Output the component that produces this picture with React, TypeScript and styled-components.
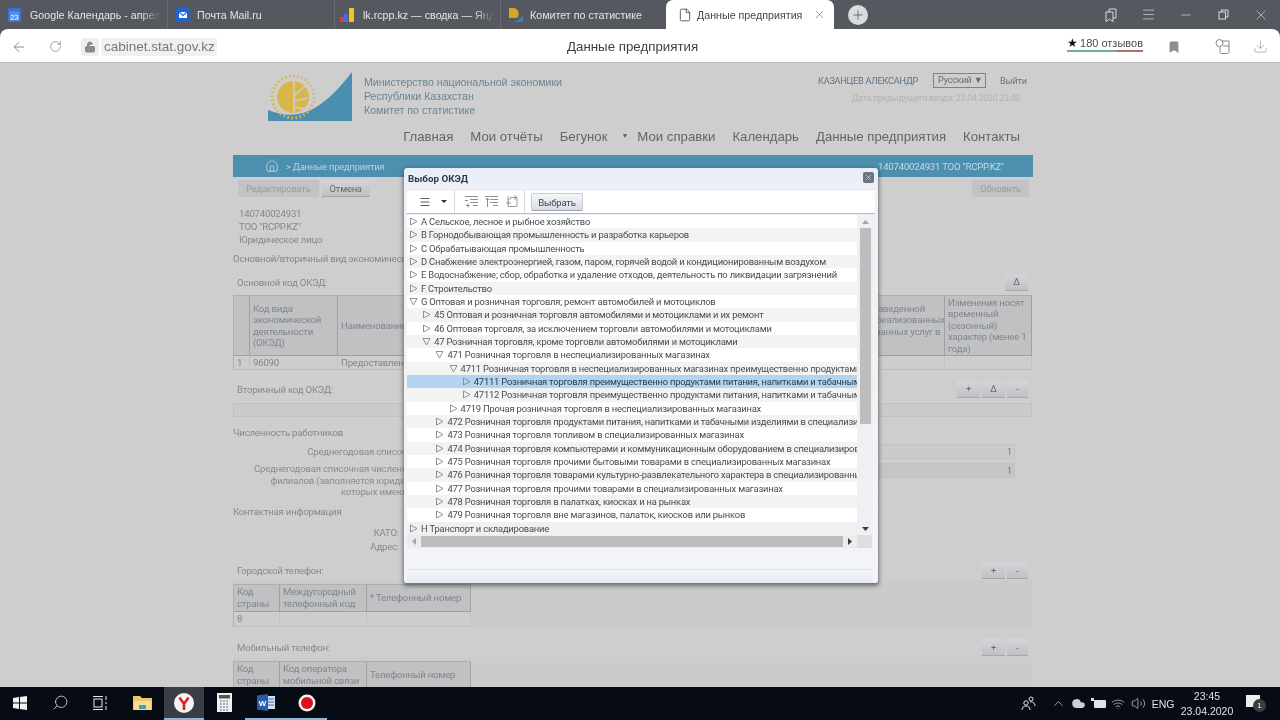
import { ArrowLeft, Bookmark, ChevronUp, Cloud, Download, File, Home, LockOpen, Menu, Minus, Plus, RotateCw, Search, Volume2, Wifi, X } from 'lucide-react';
import styled, { createGlobalStyle } from 'styled-components';

const FONT = '"Liberation Sans", Arial, sans-serif';
// the site sets Tahoma; Roboto is the nearest in shape here, tightened a little for the width
const SMALL_FONT = 'Roboto, "Liberation Sans", sans-serif';

const GlobalStyle = createGlobalStyle`
  html, body {
    margin: 0;
    padding: 0;
    width: 1280px;
    height: 720px;
    overflow: hidden;
    font-family: ${FONT};
  }
  * { box-sizing: border-box; }
`;

const Screen = styled.div`
  width: 1280px;
  height: 720px;
  display: flex;
  flex-direction: column;
  background: #55585f;
  filter: blur(0.3px);
`;

/* browser chrome */

const TabBar = styled.div`
  height: 29px;
  flex: none;
  display: flex;
  align-items: stretch;
  background: #55585f;
`;

const Tab = styled.div<{ $width: number; $left: number; $gap: number; $divider?: boolean }>`
  width: ${(p) => p.$width}px;
  padding-left: ${(p) => p.$left}px;
  display: flex;
  align-items: center;
  gap: ${(p) => p.$gap}px;
  color: #e4e5e7;
  font-size: 10.7px;
  white-space: nowrap;
  overflow: hidden;
  border-right: ${(p) => (p.$divider ? '1px solid #696c72' : 'none')};
`;

const TabTitle = styled.span<{ $fade?: boolean }>`
  flex: 1;
  overflow: hidden;
  margin-right: 6px;
  ${(p) => p.$fade && 'mask-image: linear-gradient(to right, #000 85%, transparent 100%);'}
`;

const ActiveTab = styled.div`
  width: 168px;
  margin-left: -4px;
  padding: 0 8px 0 12px;
  display: flex;
  align-items: center;
  background: #fff;
  border-radius: 7px 7px 0 0;
  color: #44464a;
  font-size: 10.7px;
  white-space: nowrap;
`;

const ActiveTitle = styled.span`
  margin-left: 5px;
  flex: 1;
`;

const NewTab = styled.div`
  width: 20px;
  height: 20px;
  margin: 5px 0 0 14px;
  border-radius: 50%;
  background: #d9dbe0;
  color: #55585f;
  display: flex;
  align-items: center;
  justify-content: center;
`;

const WindowButtons = styled.div`
  margin-left: auto;
  display: flex;
  align-items: center;
  color: #d8dadd;
`;

const WindowButton = styled.div`
  width: 37.5px;
  display: flex;
  justify-content: center;
`;

const AddressBar = styled.div`
  height: 34px;
  flex: none;
  padding-top: 2px;
  display: flex;
  align-items: center;
  background: #fff;
  border-radius: 8px 8px 0 0;
  color: #6d6f73;
  border-bottom: 1px solid #b9b9b9;
`;

const BackSlot = styled.div`
  width: 37px;
  padding-left: 11px;
  display: flex;
`;

const ReloadSlot = styled.div`
  width: 44px;
  padding-left: 12px;
  display: flex;
`;

const LockBox = styled.div`
  width: 18px;
  height: 18px;
  margin-right: 2px;
  border-radius: 3px;
  background: #eeeeee;
  display: flex;
  align-items: center;
  justify-content: center;
  color: #8a8a8a;
`;

const UrlBox = styled.div`
  width: 116px;
  height: 18px;
  padding-left: 3px;
  border-radius: 3px;
  background: #f0f0f0;
  color: #77797c;
  font-size: 13.5px;
  line-height: 18px;
`;

const PageTitle = styled.div`
  margin-left: 350px;
  color: #3f4144;
  font-size: 13.3px;
`;

const Reviews = styled.div`
  margin-left: auto;
  margin-right: 24px;
  margin-top: -5px;
  height: 15px;
  color: #4a4c50;
  font-size: 11px;
  line-height: 13px;
  border-bottom: 2px solid;
  border-image: linear-gradient(to right, #6fb08d 66%, #b96a6e 66%) 1;
`;

const Star = styled.span`
  color: #111;
  font-size: 12px;
  margin-right: 2px;
`;

const BarIcons = styled.div`
  display: flex;
  align-items: center;
  margin-right: 12px;
  color: #8a8c90;
`;

const ExtensionSlot = styled.div`
  margin-left: 33px;
  display: flex;
`;

const DownloadSlot = styled.div`
  margin-left: 22px;
  display: flex;
`;

/* dimmed page */

const Page = styled.div`
  position: relative;
  flex: 1;
  overflow: hidden;
  padding-left: 233px;
  background: #cecece;
  color: #777a7c;
  font-family: ${SMALL_FONT};
  font-size: 9.6px;
  letter-spacing: -0.2px;
`;

const Column = styled.div`
  width: 800px;
`;

const Header = styled.header`
  height: 92px;
`;

const HeaderTop = styled.div`
  display: flex;
  height: 50px;
  padding-top: 8px;
`;

const LogoSlot = styled.div`
  width: 131px;
  padding-left: 35px;
`;

const Ministry = styled.div`
  padding-top: 4px;
  color: #6e8391;
  font-family: ${FONT};
  font-size: 10.6px;
  line-height: 14px;
  letter-spacing: 0;
`;

const UserBlock = styled.div`
  margin-left: auto;
  width: 215px;
  padding-top: 2px;
  text-align: right;
`;

const UserRow = styled.div`
  display: flex;
  align-items: center;
  color: #5d7285;
  font-size: 9.1px;
  height: 15px;
  white-space: nowrap;
`;

const LangSelect = styled.div`
  width: 53px;
  height: 15px;
  margin: 0 14px 0 15px;
  border: 1px solid #808285;
  color: #6a6c6e;
  text-align: left;
  padding-left: 4px;
  line-height: 13px;
`;

const LastLogin = styled.div`
  margin: 5px 13px 0 0;
  color: #b0b2b4;
  font-size: 8.7px;
`;

const Nav = styled.nav`
  display: flex;
  justify-content: flex-end;
  gap: 17px;
  margin-top: 16px;
  padding-right: 13px;
  color: #62666a;
  font-family: ${FONT};
  font-size: 13.2px;
  letter-spacing: 0;
  white-space: nowrap;
`;

const NavCaret = styled.span`
  font-size: 7px;
  margin: 3px -8px 0 -3px;
`;

const Crumbs = styled.div`
  height: 22px;
  padding: 0 29px 0 32px;
  display: flex;
  align-items: center;
  background: #4c8fae;
  color: #b7d3e0;
  font-size: 9.4px;
`;

const CrumbText = styled.span`
  margin-left: 7px;
`;

const CrumbRight = styled.span`
  margin-left: auto;
  color: #c3dbe6;
  font-size: 9.6px;
`;

const ActionRow = styled.div`
  display: flex;
  gap: 3px;
  margin: 3px 0 0 5px;
`;

const PageButton = styled.div<{ $muted?: boolean; $wide?: number }>`
  height: 17px;
  padding: 0 8px;
  ${(p) => p.$wide && `width: ${p.$wide}px; padding: 0; justify-content: center;`}
  display: flex;
  align-items: center;
  background: ${(p) => (p.$muted ? '#c2c3c6' : 'linear-gradient(#d4d5d8, #bfc1c4)')};
  border-bottom: ${(p) => (p.$muted ? 'none' : '1px solid #a5a7aa')};
  color: ${(p) => (p.$muted ? '#9a9c9f' : '#66696d')};
  font-size: 9.4px;
`;

const RefreshSlot = styled.div`
  margin-left: auto;
  margin-right: 4px;
`;

const Company = styled.div`
  margin: 10px 0 0 6px;
  line-height: 13px;
  color: #84878a;
`;

const Note = styled.div<{ $top: number }>`
  margin-top: ${(p) => p.$top}px;
  color: #85888a;
  line-height: 13px;
`;

const SectionHead = styled.div<{ $top: number }>`
  display: flex;
  align-items: center;
  justify-content: space-between;
  height: 18px;
  margin-top: ${(p) => p.$top}px;
  padding: 0 5px 0 4px;
  color: #85888a;
`;

const Tools = styled.div`
  display: flex;
  gap: 2px;
`;

const DataGrid = styled.div<{ $columns: string; $width?: string }>`
  display: grid;
  grid-template-columns: ${(p) => p.$columns};
  width: ${(p) => p.$width ?? '799px'};
  margin-top: 4px;
  border: 1px solid #acaeb0;
  border-width: 1px 0 0 1px;
  color: #83868a;
  line-height: 11.5px;
`;

const HeadCell = styled.div<{ $height: number }>`
  height: ${(p) => p.$height}px;
  padding: 0 3px;
  display: flex;
  align-items: center;
  overflow: hidden;
  background: #bfc1c3;
  border-right: 1px solid #9fa1a3;
  border-bottom: 1px solid #9fa1a3;
`;

const HeadLines = styled.span`
  white-space: nowrap;
`;

const BodyCell = styled.div<{ $height?: number }>`
  height: ${(p) => p.$height ?? 14}px;
  padding: 0 3px;
  display: flex;
  align-items: center;
  white-space: nowrap;
  overflow: hidden;
  background: #cdcdcd;
  border-right: 1px solid #c2c2c2;
  border-bottom: 1px solid #bdbdbd;
`;

const EmptyPanel = styled.div`
  height: 14px;
  margin-top: 5px;
  width: 799px;
  border: 1px solid #c0c0c0;
  background: #cbcbcb;
`;

const CountRow = styled.div<{ $top: number }>`
  display: grid;
  grid-template-columns: 247px 535px;
  align-items: start;
  margin-top: ${(p) => p.$top}px;
`;

const CountLabel = styled.div<{ $pad?: number }>`
  padding-top: ${(p) => p.$pad ?? 0}px;
  text-align: right;
  color: #8a8d8f;
  line-height: 11.5px;
  white-space: nowrap;
`;

const CountValue = styled.div<{ $shade?: boolean }>`
  height: 15px;
  padding-right: 2px;
  text-align: right;
  line-height: 13px;
  background: ${(p) => (p.$shade ? '#c4c5c7' : '#cbcbcb')};
  border: 1px solid #c2c2c2;
`;

const AddressLine = styled.div<{ $top: number }>`
  width: 166px;
  margin-top: ${(p) => p.$top}px;
  text-align: right;
  color: #85888a;
  line-height: 14px;
`;

const PhoneWrap = styled.div`
  display: flex;
  width: 800px;
  background: #cbcbcb;
`;

/* dialog */

const Dialog = styled.div`
  position: absolute;
  left: 404px;
  top: 105px;
  width: 474px;
  height: 415px;
  padding: 0 5px 0 3px;
  display: flex;
  flex-direction: column;
  border-radius: 3px;
  background: linear-gradient(#e6eef6, #eef1f7 5%, #f2f4f9);
  box-shadow: 0 2px 4px 1px rgba(60, 60, 60, 0.65);
  color: #46494c;
`;

const DialogTitle = styled.div`
  height: 21px;
  flex: none;
  padding-left: 1px;
  display: flex;
  align-items: center;
  justify-content: space-between;
  color: #2c3a4c;
  font-size: 9.8px;
  font-weight: bold;
  letter-spacing: 0;
`;

const CloseBox = styled.div`
  width: 11px;
  height: 11px;
  margin: -2px -1px 0 0;
  border-radius: 2px;
  background: #6d7480;
  color: #e8e8e8;
  display: flex;
  align-items: center;
  justify-content: center;
`;

const Toolbar = styled.div`
  height: 25px;
  flex: none;
  margin-right: -2px;
  display: flex;
  align-items: stretch;
  background: #fff;
  border-top: 1px solid #e3e6ea;
  border-bottom: 1px solid #b6b8bb;
`;

const ToolGroup = styled.div<{ $width: number; $gap?: number; $inset: number }>`
  width: ${(p) => p.$width}px;
  padding-left: ${(p) => p.$inset}px;
  display: flex;
  align-items: center;
  justify-content: center;
  gap: ${(p) => p.$gap ?? 0}px;
  border-right: 1px solid #d8dadd;
`;

const ToolCaret = styled.span`
  width: 0;
  height: 0;
  margin-left: 10px;
  border-left: 3px solid transparent;
  border-right: 3px solid transparent;
  border-top: 3px solid #30333a;
`;

const PickButton = styled.div`
  height: 18px;
  margin: 3px 0 0 6px;
  width: 52px;
  display: flex;
  align-items: center;
  justify-content: center;
  border: 1px solid #c8ccd2;
  border-bottom-color: #9ba2ab;
  border-radius: 2px;
  background: linear-gradient(#f4f6f9, #d8dee6);
  color: #404754;
`;

const TreeArea = styled.div`
  height: 333px;
  flex: none;
  margin-top: 1px;
  display: grid;
  grid-template-columns: 450px 15px;
  grid-template-rows: 320px 13px;
  overflow: hidden;
  background: #eef0f3;
`;

const TreeList = styled.div`
  overflow: hidden;
`;

const TreeRow = styled.div<{ $depth: number; $alt: boolean; $selected?: boolean; $last?: boolean }>`
  height: 13.333px;
  padding-left: ${(p) => 2 + p.$depth * 13.2}px;
  display: flex;
  align-items: center;
  gap: 3px;
  background: ${(p) => (p.$selected ? '#b2d4f1' : p.$last ? '#eef0f3' : p.$alt ? '#f3f3f2' : '#ffffff')};
  color: ${(p) => (p.$selected ? '#2e3c4a' : '#4a4c4f')};
  font-size: 9.4px;
  white-space: nowrap;
  overflow: hidden;
`;

const VScroll = styled.div`
  padding-left: 2px;
  display: flex;
  flex-direction: column;
  align-items: center;
  background: #eef0f3;
`;

const ScrollCap = styled.div`
  height: 13px;
  flex: none;
  display: flex;
  align-items: center;
  justify-content: center;
`;

const VThumb = styled.div`
  width: 11px;
  height: 196px;
  background: #bdbdbd;
`;

const VTrack = styled.div`
  flex: 1;
`;

const HScroll = styled.div`
  display: flex;
  align-items: center;
  height: 13px;
  background: #ececec;
`;

const HThumb = styled.div`
  width: 424px;
  height: 11px;
  background: #bdbdbd;
`;

const HCap = styled.div`
  width: 14px;
  display: flex;
  justify-content: center;
`;

const Corner = styled.div`
  background: #dfdfdf;
`;

const DialogFooter = styled.div`
  height: 22px;
  flex: none;
  border-bottom: 1px solid #dfe3e8;
`;

const Grip = styled.div`
  flex: 1;
  background: linear-gradient(#f4f6fa, #e6ebf2);
`;

/* taskbar */

const Taskbar = styled.div`
  height: 33px;
  flex: none;
  display: flex;
  align-items: center;
  background: #070b13;
  color: #e9e9e9;
`;

const TaskSlot = styled.div<{ $width: number; $active?: boolean; $running?: boolean }>`
  width: ${(p) => p.$width}px;
  height: 33px;
  display: flex;
  align-items: center;
  justify-content: center;
  background: ${(p) => (p.$active ? '#3a3d44' : 'transparent')};
  border-bottom: 2px solid ${(p) => (p.$active || p.$running ? '#8fb6d8' : 'transparent')};
`;

const Tray = styled.div`
  margin-left: auto;
  display: flex;
  align-items: center;
  color: #e2e2e2;
`;

const TrayItem = styled.div<{ $width: number; $left?: number }>`
  width: ${(p) => p.$width}px;
  margin-left: ${(p) => p.$left ?? 0}px;
  display: flex;
  justify-content: center;
  align-items: center;
  font-size: 10.5px;
`;

const Clock = styled.div`
  width: 66px;
  text-align: center;
  font-size: 10.5px;
  line-height: 15px;
`;

const Badge = styled.span`
  position: absolute;
  right: -6px;
  bottom: -5px;
  width: 13px;
  height: 13px;
  border-radius: 50%;
  background: #3a3c40;
  color: #fff;
  font-size: 8px;
  line-height: 13px;
  text-align: center;
`;

const NoteIcon = styled.div`
  position: relative;
  width: 14px;
  height: 12px;
  background: #eeeeee;
  margin: -6px 14px 0 0;
`;

function TreeArrow({ open }: { open?: boolean }) {
  return (
    <svg width="9" height="9" viewBox="0 0 9 9" style={{ flex: 'none' }}>
      <path d={open ? 'M1 1.5 H8 L4.5 8 Z' : 'M1.5 1 V8 L8 4.5 Z'} fill="none" stroke="#85878a" strokeWidth="0.9" />
    </svg>
  );
}

function Logo() {
  return (
    <svg width="84" height="50" viewBox="0 0 84 50">
      <path d="M0 50 V39 C12 44 24 45 35 42 C52 37 68 22 84 1 V50 Z" fill="#4a8fb0" />
      <circle cx="25" cy="26" r="16" fill="#d9b648" />
      <path d="M26 10 V42 M26 25 L37 15 M26 30 L40 27 M26 36 L37 38" stroke="#cecece" strokeWidth="1.5" fill="none" />
      <circle cx="25" cy="26" r="21" fill="none" stroke="#d9b648" strokeWidth="3" strokeDasharray="1.5 2.6" />
    </svg>
  );
}

function CalendarIcon() {
  return (
    <svg width="13" height="14" viewBox="0 0 13 14">
      <rect width="13" height="14" rx="1.5" fill="#3b6fd0" />
      <rect x="1.5" y="3.5" width="10" height="9" fill="#5d8ee6" />
      <text x="6.5" y="11.5" fontSize="7.5" fill="#fff" textAnchor="middle" fontFamily={FONT}>23</text>
    </svg>
  );
}

function MailIcon() {
  return (
    <svg width="14" height="14" viewBox="0 0 14 14">
      <rect width="14" height="14" rx="3" fill="#1c64d6" />
      <path d="M3 4 H11 V10 H3 Z" fill="#fff" />
      <path d="M3 4 L7 7.5 L11 4" fill="none" stroke="#1c64d6" strokeWidth="1.1" />
    </svg>
  );
}

function MetricaIcon() {
  return (
    <svg width="15" height="16" viewBox="0 0 15 16">
      <rect x="0" y="10" width="4" height="5" fill="#e23b3b" />
      <rect x="4" y="7" width="4" height="8" fill="#4a6cd8" />
      <rect x="9" y="1" width="5" height="14" rx="1" fill="#f5c518" />
    </svg>
  );
}

function StatIcon() {
  return (
    <svg width="16" height="16" viewBox="0 0 16 16">
      <path d="M1 1 H6 A6 6 0 0 1 9 11 H1 Z" fill="#d9a62b" />
      <path d="M5 15 C9 14 13 11 15 8 V15 Z" fill="#3a7fb0" />
    </svg>
  );
}

function TabListIcon() {
  return (
    <svg width="16" height="16" viewBox="0 0 16 16" fill="none" stroke="currentColor" strokeWidth="1">
      <path d="M6 5 V2 H13 V11 H10" />
      <path d="M3 5 H10 V14.5 L6.5 12 L3 14.5 Z" />
    </svg>
  );
}

function RestoreIcon() {
  return (
    <svg width="11" height="11" viewBox="0 0 11 11" fill="none" stroke="currentColor" strokeWidth="1">
      <rect x="1" y="3" width="6.5" height="7" />
      <path d="M3.5 3 V1 H10 V8 H7.5" />
    </svg>
  );
}

function ExtensionIcon() {
  return (
    <svg width="17" height="17" viewBox="0 0 17 17" fill="none" stroke="#85878b" strokeWidth="1">
      <circle cx="5.5" cy="5" r="3.5" />
      <path d="M8 3 H15 V14 C15 15 14 15.5 13 15.5 H8 C6.5 15.5 6 14.5 6 13.5 V9" />
      <path d="M9 8 H15" />
    </svg>
  );
}

function ExpandAllIcon({ flip }: { flip?: boolean }) {
  return (
    <svg width="13" height="13" viewBox="0 0 13 13" fill="none" stroke="#8d9093" strokeWidth="1">
      <path d="M0 1.5 H13" />
      <path d="M5 4.5 H13 M5 7.5 H13 M8 10.5 H13" />
      {flip ? <path d="M2.5 3 V12 M1 5 L2.5 3 L4 5" /> : <path d="M1 10.5 H5 M3 8.5 V12.5 M0 5.5 H3" />}
    </svg>
  );
}

function MoveNodeIcon() {
  return (
    <svg width="14" height="13" viewBox="0 0 14 13" fill="none" stroke="#9a9c9f" strokeWidth="1">
      <path d="M3 1 V4 H6" />
      <path d="M5 2.5 H12 V11.5 H3 V4" />
      <path d="M9 0.5 L12 2.5 L9 4.5" />
      <path d="M1 8 H6 M3.5 6 V10" />
    </svg>
  );
}

function WindowsLogo() {
  return (
    <svg width="14" height="14" viewBox="0 0 14 14" fill="#f2f2f2">
      <path d="M0 2 L6 1.1 V6.6 H0 Z M7 1 L14 0 V6.6 H7 Z M0 7.4 H6 V12.9 L0 12 Z M7 7.4 H14 V14 L7 13 Z" />
    </svg>
  );
}

function TaskViewIcon() {
  return (
    <svg width="15" height="14" viewBox="0 0 15 14" fill="none" stroke="#e9e9e9" strokeWidth="1">
      <rect x="1" y="3" width="8" height="8" />
      <path d="M0 0.5 H10 M0 13.5 H10 M13 0 V4 M13 6 V8 M13 10 V14" />
    </svg>
  );
}

function FolderIcon() {
  return (
    <svg width="19" height="16" viewBox="0 0 19 16">
      <path d="M0 1 H7 L9 3 H19 V15 H0 Z" fill="#e9c867" />
      <rect x="1" y="6" width="17" height="9" fill="#f6dd8e" />
      <rect x="6" y="10" width="7" height="4" fill="#3aa0c8" />
    </svg>
  );
}

function YandexIcon() {
  return (
    <svg width="20" height="20" viewBox="0 0 20 20">
      <circle cx="10" cy="10" r="10" fill="#f4f4f4" />
      <path d="M5.5 4.5 L10 11 L14.5 4.5 M10 11 V17" fill="none" stroke="#d9232e" strokeWidth="2.6" />
    </svg>
  );
}

function CalculatorIcon() {
  return (
    <svg width="15" height="19" viewBox="0 0 15 19">
      <rect width="15" height="19" fill="#f1f1f1" />
      <rect x="2" y="2" width="11" height="3.5" fill="#555" />
      <path d="M3 8 H12 M3 11 H12 M3 14 H12 M3 17 H12" stroke="#444" strokeWidth="1.2" strokeDasharray="1.6 1.6" />
    </svg>
  );
}

function WordIcon() {
  return (
    <svg width="18" height="17" viewBox="0 0 18 17">
      <rect x="6" y="2" width="12" height="13" fill="#d4e1f3" />
      <path d="M10 5 H17 M10 8 H17 M10 11 H17" stroke="#3c6eb4" strokeWidth="1" />
      <path d="M0 1.5 L11 0 V17 L0 15.5 Z" fill="#2a5ca8" />
      <text x="5.5" y="11.5" fontSize="8" fontWeight="bold" fill="#fff" textAnchor="middle" fontFamily={FONT}>W</text>
    </svg>
  );
}

function RecordIcon() {
  return (
    <svg width="18" height="18" viewBox="0 0 18 18">
      <circle cx="9" cy="9" r="8.5" fill="#f4f4f4" />
      <circle cx="9" cy="9" r="6" fill="#d8121c" />
    </svg>
  );
}

function PeopleIcon() {
  return (
    <svg width="15" height="15" viewBox="0 0 15 15" fill="none" stroke="#e2e2e2" strokeWidth="1">
      <circle cx="5" cy="7" r="2.2" />
      <path d="M1 14 C1 11 3 10 5 10 C7 10 9 11 9 14" />
      <circle cx="10" cy="3" r="2" />
      <path d="M9 6 C11 5.5 14 6.5 14 10" />
    </svg>
  );
}

function BatteryIcon() {
  return (
    <svg width="15" height="11" viewBox="0 0 15 11" fill="#e2e2e2">
      <rect x="0" y="0" width="3" height="3" />
      <rect x="3" y="2" width="12" height="8" rx="1" />
    </svg>
  );
}

type Node = { depth: number; label: string; open?: boolean; selected?: boolean };

const TREE: Node[] = [
  { depth: 0, label: 'A Сельское, лесное и рыбное хозяйство' },
  { depth: 0, label: 'B Горнодобывающая промышленность и разработка карьеров' },
  { depth: 0, label: 'C Обрабатывающая промышленность' },
  { depth: 0, label: 'D Снабжение электроэнергией, газом, паром, горячей водой и кондиционированным воздухом' },
  { depth: 0, label: 'E Водоснабжение; сбор, обработка и удаление отходов, деятельность по ликвидации загрязнений' },
  { depth: 0, label: 'F Строительство' },
  { depth: 0, open: true, label: 'G Оптовая и розничная торговля; ремонт автомобилей и мотоциклов' },
  { depth: 1, label: '45 Оптовая и розничная торговля автомобилями и мотоциклами и их ремонт' },
  { depth: 1, label: '46 Оптовая торговля, за исключением торговли автомобилями и мотоциклами' },
  { depth: 1, open: true, label: '47 Розничная торговля, кроме торговли автомобилями и мотоциклами' },
  { depth: 2, open: true, label: '471 Розничная торговля в неспециализированных магазинах' },
  { depth: 3, open: true, label: '4711 Розничная торговля в неспециализированных магазинах преимущественно продуктами питания' },
  { depth: 4, selected: true, label: '47111 Розничная торговля преимущественно продуктами питания, напитками и табачными изделиями' },
  { depth: 4, label: '47112 Розничная торговля преимущественно продуктами питания, напитками и табачными изделиями' },
  { depth: 3, label: '4719 Прочая розничная торговля в неспециализированных магазинах' },
  { depth: 2, label: '472 Розничная торговля продуктами питания, напитками и табачными изделиями в специализированных магазинах' },
  { depth: 2, label: '473 Розничная торговля топливом в специализированных магазинах' },
  { depth: 2, label: '474 Розничная торговля компьютерами и коммуникационным оборудованием в специализированных магазинах' },
  { depth: 2, label: '475 Розничная торговля прочими бытовыми товарами в специализированных магазинах' },
  { depth: 2, label: '476 Розничная торговля товарами культурно-развлекательного характера в специализированных магазинах' },
  { depth: 2, label: '477 Розничная торговля прочими товарами в специализированных магазинах' },
  { depth: 2, label: '478 Розничная торговля в палатках, киосках и на рынках' },
  { depth: 2, label: '479 Розничная торговля вне магазинов, палаток, киосков или рынков' },
  { depth: 0, label: 'H Транспорт и складирование' },
];

export default function App() {
  return (
    <Screen>
      <GlobalStyle />
      <TabBar>
        <Tab $width={168} $left={8} $gap={9} $divider>
          <CalendarIcon />
          <TabTitle $fade>Google Календарь - апрель 2020</TabTitle>
        </Tab>
        <Tab $width={167} $left={8} $gap={7} $divider>
          <MailIcon />
          <TabTitle>Почта Mail.ru</TabTitle>
        </Tab>
        <Tab $width={166} $left={5} $gap={8} $divider>
          <MetricaIcon />
          <TabTitle $fade>lk.rcpp.kz — сводка — Яндекс</TabTitle>
        </Tab>
        <Tab $width={169} $left={7} $gap={6}>
          <StatIcon />
          <TabTitle>Комитет по статистике</TabTitle>
        </Tab>
        <ActiveTab>
          <File size={14} color="#3c3e42" strokeWidth={1.4} />
          <ActiveTitle>Данные предприятия</ActiveTitle>
          <X size={13} color="#6a6c70" strokeWidth={1.2} />
        </ActiveTab>
        <NewTab>
          <Plus size={14} strokeWidth={1.4} />
        </NewTab>
        <WindowButtons>
          <WindowButton><TabListIcon /></WindowButton>
          <WindowButton><Menu size={15} strokeWidth={1.1} /></WindowButton>
          <WindowButton><Minus size={14} strokeWidth={1.2} /></WindowButton>
          <WindowButton><RestoreIcon /></WindowButton>
          <WindowButton><X size={16} strokeWidth={1} /></WindowButton>
        </WindowButtons>
      </TabBar>

      <AddressBar>
        <BackSlot><ArrowLeft size={16} strokeWidth={1.2} /></BackSlot>
        <ReloadSlot><RotateCw size={13} strokeWidth={1.2} /></ReloadSlot>
        <LockBox><LockOpen size={12} strokeWidth={2} fill="#8a8a8a" /></LockBox>
        <UrlBox>cabinet.stat.gov.kz</UrlBox>
        <PageTitle>Данные предприятия</PageTitle>
        <Reviews><Star>★</Star>180 отзывов</Reviews>
        <BarIcons>
          <Bookmark size={14} fill="#8d8f93" strokeWidth={1} />
          <ExtensionSlot><ExtensionIcon /></ExtensionSlot>
          <DownloadSlot><Download size={15} strokeWidth={1} /></DownloadSlot>
        </BarIcons>
      </AddressBar>

      <Page>
        <Column>
          <Header>
            <HeaderTop>
              <LogoSlot><Logo /></LogoSlot>
              <Ministry>
                Министерство национальной экономики<br />
                Республики Казахстан<br />
                Комитет по статистике
              </Ministry>
              <UserBlock>
                <UserRow>
                  КАЗАНЦЕВ АЛЕКСАНДР
                  <LangSelect>Русский ▼</LangSelect>
                  Выйти
                </UserRow>
                <LastLogin>Дата предыдущего входа: 23.04.2020 23:40</LastLogin>
              </UserBlock>
            </HeaderTop>
            <Nav>
              <span>Главная</span>
              <span>Мои отчёты</span>
              <span>Бегунок</span>
              <NavCaret>▼</NavCaret>
              <span>Мои справки</span>
              <span>Календарь</span>
              <span>Данные предприятия</span>
              <span>Контакты</span>
            </Nav>
          </Header>
          <Crumbs>
            <Home size={14} strokeWidth={1.2} color="#d5e5ec" />
            <CrumbText>&gt; Данные предприятия</CrumbText>
            <CrumbRight>140740024931 ТОО "RCPP.KZ"</CrumbRight>
          </Crumbs>
          <ActionRow>
            <PageButton $muted>Редактировать</PageButton>
            <PageButton>Отмена</PageButton>
            <RefreshSlot><PageButton $muted>Обновить</PageButton></RefreshSlot>
          </ActionRow>
          <Company>
            140740024931<br />
            ТОО "RCPP.KZ"<br />
            Юридическое лицо
          </Company>
          <Note $top={6}>Основной/вторичный вид экономической деятельности</Note>
          <SectionHead $top={8}>
            <span>Основной код ОКЭД:</span>
            <PageButton $wide={23}>Δ</PageButton>
          </SectionHead>
          <DataGrid $columns="16px 88px 240px 245px 122px 1fr">
            <HeadCell $height={60} />
            <HeadCell $height={60}>Код вида экономической деятельности (ОКЭД)</HeadCell>
            <HeadCell $height={60}>Наименование</HeadCell>
            <HeadCell $height={60} />
            <HeadCell $height={60}>
              <HeadLines>
                Объем произведенной<br />
                продукции, реализованных<br />
                работ и оказанных услуг в<br />
                тенге
              </HeadLines>
            </HeadCell>
            <HeadCell $height={60}>Изменения носят временный (сезонный) характер (менее 1 года)</HeadCell>
            <BodyCell>1</BodyCell>
            <BodyCell>96090</BodyCell>
            <BodyCell>Предоставление</BodyCell>
            <BodyCell />
            <BodyCell />
            <BodyCell />
          </DataGrid>
          <SectionHead $top={10}>
            <span>Вторичный код ОКЭД:</span>
            <Tools>
              <PageButton $wide={23}>+</PageButton>
              <PageButton $wide={23}>Δ</PageButton>
              <PageButton $wide={21}>-</PageButton>
            </Tools>
          </SectionHead>
          <EmptyPanel />
          <Note $top={9}>Численность работников</Note>
          <CountRow $top={5}>
            <CountLabel $pad={2}>Среднегодовая списочная численность</CountLabel>
            <CountValue>1</CountValue>
          </CountRow>
          <CountRow $top={4}>
            <CountLabel>
              Среднегодовая списочная численность работников<br />
              филиалов (заполняется юридическими лицами,<br />
              которых имеются филиалы, чел
            </CountLabel>
            <CountValue $shade>1</CountValue>
          </CountRow>
          <Note $top={7}>Контактная информация</Note>
          <AddressLine $top={8}>КАТО:</AddressLine>
          <AddressLine $top={0}>Адрес:</AddressLine>
          <SectionHead $top={8}>
            <span>Городской телефон:</span>
            <Tools>
              <PageButton $wide={23}>+</PageButton>
              <PageButton $wide={21}>-</PageButton>
            </Tools>
          </SectionHead>
          <PhoneWrap>
            <DataGrid $columns="46px 87px 104px" $width="238px">
              <HeadCell $height={27}>Код страны</HeadCell>
              <HeadCell $height={27}>Междугородный телефонный код</HeadCell>
              <HeadCell $height={27}>* Телефонный номер</HeadCell>
              <BodyCell $height={15}>8</BodyCell>
              <BodyCell $height={15} />
              <BodyCell $height={15} />
            </DataGrid>
          </PhoneWrap>
          <SectionHead $top={12}>
            <span>Мобильный телефон:</span>
            <Tools>
              <PageButton $wide={23}>+</PageButton>
              <PageButton $wide={21}>-</PageButton>
            </Tools>
          </SectionHead>
          <PhoneWrap>
            <DataGrid $columns="46px 87px 104px" $width="238px">
              <HeadCell $height={27}>Код страны</HeadCell>
              <HeadCell $height={27}>Код оператора мобильной связи</HeadCell>
              <HeadCell $height={27}>Телефонный номер</HeadCell>
            </DataGrid>
          </PhoneWrap>
        </Column>

        <Dialog>
          <DialogTitle>
            Выбор ОКЭД
            <CloseBox><X size={9} strokeWidth={1.6} /></CloseBox>
          </DialogTitle>
          <Toolbar>
            <ToolGroup $width={48} $inset={4}>
              <Menu size={12} color="#30333a" strokeWidth={1.6} />
              <ToolCaret />
            </ToolGroup>
            <ToolGroup $width={70} $gap={7} $inset={4}>
              <ExpandAllIcon />
              <ExpandAllIcon flip />
              <MoveNodeIcon />
            </ToolGroup>
            <PickButton>Выбрать</PickButton>
          </Toolbar>
          <TreeArea>
            <TreeList>
              {TREE.map((node, index) => (
                <TreeRow
                  key={node.label}
                  $depth={node.depth}
                  $alt={index % 2 === 1}
                  $selected={node.selected}
                  $last={index === TREE.length - 1}
                >
                  <TreeArrow open={node.open} />
                  {node.label}
                </TreeRow>
              ))}
            </TreeList>
            <VScroll>
              <ScrollCap>
                <svg width="7" height="4" viewBox="0 0 7 4"><path d="M0 4 L3.5 0 L7 4 Z" fill="#a5a5a5" /></svg>
              </ScrollCap>
              <VThumb />
              <VTrack />
              <ScrollCap>
                <svg width="7" height="4" viewBox="0 0 7 4"><path d="M0 0 L3.5 4 L7 0 Z" fill="#3c3c3c" /></svg>
              </ScrollCap>
            </VScroll>
            <HScroll>
              <HCap>
                <svg width="4" height="7" viewBox="0 0 4 7"><path d="M4 0 L0 3.5 L4 7 Z" fill="#a5a5a5" /></svg>
              </HCap>
              <HThumb />
              <HCap>
                <svg width="4" height="7" viewBox="0 0 4 7"><path d="M0 0 L4 3.5 L0 7 Z" fill="#3c3c3c" /></svg>
              </HCap>
            </HScroll>
            <Corner />
          </TreeArea>
          <DialogFooter />
          <Grip />
        </Dialog>
      </Page>

      <Taskbar>
        <TaskSlot $width={40}><WindowsLogo /></TaskSlot>
        <TaskSlot $width={40}><Search size={17} strokeWidth={1.1} style={{ transform: 'scaleX(-1)' }} /></TaskSlot>
        <TaskSlot $width={40}><TaskViewIcon /></TaskSlot>
        <TaskSlot $width={44}><FolderIcon /></TaskSlot>
        <TaskSlot $width={40} $active><YandexIcon /></TaskSlot>
        <TaskSlot $width={41}><CalculatorIcon /></TaskSlot>
        <TaskSlot $width={41} $running><WordIcon /></TaskSlot>
        <TaskSlot $width={41} $running><RecordIcon /></TaskSlot>
        <Tray>
          <TrayItem $width={40}><PeopleIcon /></TrayItem>
          <TrayItem $width={20}><ChevronUp size={15} strokeWidth={1.1} /></TrayItem>
          <TrayItem $width={20}><Cloud size={15} fill="#cfcfcf" strokeWidth={0} /></TrayItem>
          <TrayItem $width={20}><BatteryIcon /></TrayItem>
          <TrayItem $width={20}><Wifi size={14} strokeWidth={1.1} /></TrayItem>
          <TrayItem $width={20}><Volume2 size={15} strokeWidth={1.1} /></TrayItem>
          <TrayItem $width={22} $left={4}>ENG</TrayItem>
          <Clock>23:45<br />23.04.2020</Clock>
          <TrayItem $width={40}>
            <NoteIcon><Badge>1</Badge></NoteIcon>
          </TrayItem>
        </Tray>
      </Taskbar>
    </Screen>
  );
}
